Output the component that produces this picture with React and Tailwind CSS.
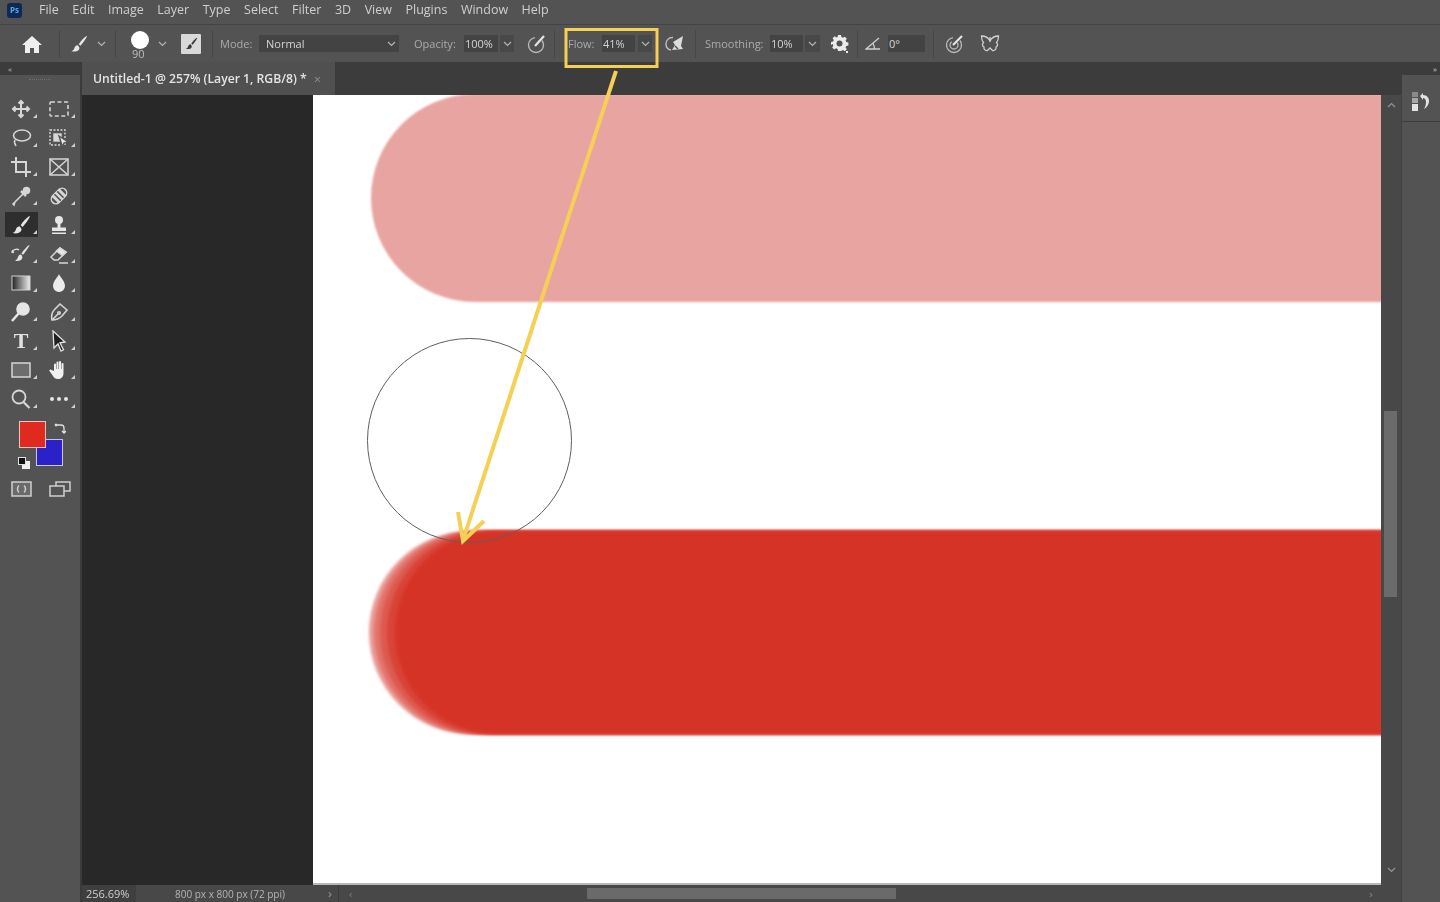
import React from "react";

const menus = ["File", "Edit", "Image", "Layer", "Type", "Select", "Filter", "3D", "View", "Plugins", "Window", "Help"];

const Chevron = ({ className = "" }) => (
  <svg width="9" height="6" viewBox="0 0 9 6" fill="none" stroke="#b5b5b5" strokeWidth="1.2" className={className}>
    <path d="M1 1l3.5 3.5L8 1" />
  </svg>
);

const Sep = ({ className = "" }) => <div className={`h-[28px] w-px bg-[#474747] ${className}`} />;

const BrushGlyph = ({ size = 18, color = "#e6e6e6" }) => (
  <svg width={size} height={size} viewBox="0 0 18 18" fill={color}>
    <path d="M16.5 1c-2.5 1.6-6 5.300-7.800 8.200l1.800 1.500C12.800 8.300 15.500 4.300 17 1.600z" />
    <path d="M7.700 10.200c-2 .2-3 1.500-3.400 3-.3 1.200-1.300 2.400-3 3 3 .8 6.500.4 7.700-1.700.7-1.200.5-2.300-.2-3.100z" />
  </svg>
);

// tool icons, 22x22 box, two columns per row
const I = ({ children, fill = "none", stroke = "#d6d6d6", sw = 1.6 }) => (
  <svg width="22" height="22" viewBox="0 0 22 22" fill={fill} stroke={stroke} strokeWidth={sw}>
    {children}
  </svg>
);

const tools = [
  [
    <I sw={2}><path d="M11 3v16M3 11h16M8.500 5.500L11 3l2.500 2.500M8.500 16.500L11 19l2.500-2.500M5.500 8.500L3 11l2.500 2.500M16.500 8.500L19 11l-2.500 2.500" /></I>,
    <I sw={1.6}><rect x="2" y="4" width="18" height="14" rx="1" strokeDasharray="4 2.500" /></I>,
  ],
  [
    <I><ellipse cx="12" cy="8.500" rx="8.500" ry="5.500" /><path d="M5 13c-1.500 2 0 4 1 6" /></I>,
    <I sw={1.400}><rect x="2" y="3" width="15" height="15" strokeDasharray="2 1.500" /><rect x="6" y="7" width="7" height="7" fill="#d6d6d6" /><path d="M11 9l9 6-4 1-1.500 4z" fill="#e8e8e8" stroke="#535353" /></I>,
  ],
  [
    <I sw={2}><path d="M1 6h15v15M6 1v15h15" /></I>,
    <I sw={1.500}><rect x="2" y="3" width="18" height="16" /><path d="M2 3l18 16M20 3L2 19" /></I>,
  ],
  [
    <I sw={1.500}><path d="M14 8l-9 9-1 3-1-1 2-2" /><path d="M11 6l5 5" strokeWidth="2.500" /><circle cx="16.500" cy="5.500" r="3" fill="#d6d6d6" /></I>,
    <I sw={1.500}><g transform="rotate(-45 11 11)"><rect x="2" y="6.500" width="18" height="9" rx="4.500" /><rect x="6" y="6.500" width="10" height="9" fill="#d6d6d6" /><path d="M9 6.500v9M13 6.500v9" stroke="#535353" /></g></I>,
  ],
  [
    <BrushGlyph size={20} />,
    <I fill="#e6e6e6" stroke="none"><circle cx="11" cy="6" r="4" /><rect x="9.500" y="8" width="3" height="6" /><path d="M4 13.500h14V17H4zM4 18.500h14V20H4z" /></I>,
  ],
  [
    <I fill="#e6e6e6" stroke="none"><path d="M19 2c-2 1.500-6 6-7.500 8.500l1.500 1.200C15 9.500 18 5 19.500 2.500zM11 11.500c-1.800.2-2.500 1.300-3 2.500-.3 1.300-1.200 2.800-3 3.800 3 .6 6-.2 7-2 .6-1.200.4-2.500-1-4.300z" /><path d="M2 8.500c2-2 5-3 7-1.500M3 7l-1 2 2 .5" fill="none" stroke="#e6e6e6" strokeWidth="1.300" /></I>,
    <I sw={1.500}><path d="M3 14l9-9 6 4-8 8H6z" /><path d="M12 5l6 4-3.500 3.500-6-4.500z" fill="#e6e6e6" /><path d="M11 20h9" /></I>,
  ],
  [
    <svg width="20" height="16" viewBox="0 0 20 16">
      <defs>
        <linearGradient id="grad" x1="0" x2="1" y1="0" y2="0">
          <stop offset="0" stopColor="#222" />
          <stop offset="1" stopColor="#eee" />
        </linearGradient>
      </defs>
      <rect x="1" y="1" width="18" height="14" fill="url(#grad)" stroke="#d0d0d0" />
    </svg>,
    <I fill="#ececec" stroke="none"><path d="M11 2c-1 3-6 7-6 12a6 6 0 0012 0c0-5-5-9-6-12z" /></I>,
  ],
  [
    <I fill="#e6e6e6" stroke="#e6e6e6"><circle cx="13" cy="8" r="6" /><path d="M9 12l-7 8" strokeWidth="2.500" /></I>,
    <I sw={1.600}><path d="M4 19c-1-4 0-8 3-11l5-5 7 6-5 6c-3 3-6 4-10 4z" /><path d="M4 19l6-6" /><circle cx="11" cy="12" r="1.200" /></I>,
  ],
  [
    <span className="font-['Liberation_Serif',serif] text-[22px] font-bold leading-[22px] text-[#e2e2e2]">T</span>,
    <I fill="#1f1f1f" stroke="#e2e2e2" sw={1.300}><path d="M5 1l12 11-5 .8 3.500 7-2.500 1.200-3-7L6 18z" /></I>,
  ],
  [
    <svg width="20" height="16" viewBox="0 0 20 16">
      <rect x="1" y="1" width="18" height="14" fill="#6d6d6d" stroke="#d6d6d6" strokeWidth="1.500" />
    </svg>,
    <I fill="#f0f0f0" stroke="none"><path d="M6 12V5.500a1 1 0 012 0V10h.5V3.500a1 1 0 012 0V10h.5V3a1 1 0 012 0v7h.5V5a1 1 0 012 0v9c0 4-2.500 6-5.500 6-2.500 0-4-1-5-3l-3.500-5c-.6-1 .6-2 1.600-1.200z" /></I>,
  ],
  [
    <I sw={1.800}><circle cx="9" cy="9" r="6.500" /><path d="M13.500 14l6 6" strokeWidth="2.200" /></I>,
    <I fill="#e6e6e6" stroke="none"><circle cx="4" cy="11" r="2" /><circle cx="11" cy="11" r="2" /><circle cx="18" cy="11" r="2" /></I>,
  ],
];

const Tool = ({ children, active, corner = true }) => (
  <div className="relative flex h-[29px] w-[38px] items-center justify-center">
    {active && <div className="absolute bottom-[2px] left-[3px] right-[2px] top-[2px] bg-[#2e2e2e]" />}
    <div className="relative flex items-center justify-center">{children}</div>
    {corner && <div className="absolute bottom-[5px] right-[3px] h-0 w-0 border-b-[4px] border-l-[4px] border-b-[#d0d0d0] border-l-transparent" />}
  </div>
);

const ToolPanel = () => (
  <aside className="flex w-[82px] shrink-0 flex-col border-r-2 border-[#3a3a3a] bg-[#535353]">
    <div className="flex h-[13px] items-center bg-[#3c3c3c] pl-[8px] text-[8px] leading-none text-[#bdbdbd]">«</div>
    <div className="mx-auto mt-[4px] h-[2px] w-[22px] border-t border-dotted border-[#6e6e6e]" />
    <div className="mt-[13px] flex flex-col pl-[2px] blur-[0.4px]">
      {tools.map((row, i) => (
        <div key={i} className="flex">
          <Tool active={i === 4}>{row[0]}</Tool>
          <Tool>{row[1]}</Tool>
        </div>
      ))}
    </div>
    <div className="relative ml-[18px] mt-[8px] h-[48px] w-[48px]">
      <div className="absolute left-[18px] top-[18px] h-[27px] w-[27px] border border-[#c6c6e6] bg-[#2a22c8]" />
      <div className="absolute left-[1px] top-0 h-[27px] w-[27px] border border-[#eac4c0] bg-[#e0291f]" />
      <svg className="absolute left-[36px] top-[2px]" width="12" height="12" viewBox="0 0 12 12" fill="none" stroke="#e0e0e0" strokeWidth="1.300">
        <path d="M2 2h5a3 3 0 013 3v5M1 3l2-2M1 1l2 2M8 8l2 2 2-2" />
      </svg>
      <div className="absolute left-[4px] top-[40px] h-[8px] w-[8px] bg-[#f0f0f0]" />
      <div className="absolute left-[0px] top-[36px] h-[8px] w-[8px] border border-[#e0e0e0] bg-[#111]" />
    </div>
    <div className="mt-[12px] flex items-center pl-[11px] blur-[0.4px]">
      <svg width="21" height="16" viewBox="0 0 21 16" fill="none" stroke="#cfcfcf" strokeWidth="1.500">
        <rect x="1" y="1" width="19" height="14" fill="#6a6a6a" />
        <path d="M8 4.500c-2 1.500-2 5.500 0 7M13 4.500c2 1.500 2 5.500 0 7" />
      </svg>
      <svg className="ml-[17px]" width="22" height="16" viewBox="0 0 22 16" fill="none" stroke="#cfcfcf" strokeWidth="1.500">
        <rect x="7" y="1" width="14" height="9" />
        <rect x="1" y="5" width="14" height="10" fill="#535353" />
      </svg>
    </div>
  </aside>
);

const Label = ({ children, className = "" }) => <span className={`text-[11px] leading-none text-[#ababab] ${className}`}>{children}</span>;

const Field = ({ children, className = "" }) => (
  <div className={`flex h-[17px] items-center bg-[#434343] pl-[1px] text-[11px] leading-none text-[#d4d4d4] ${className}`}>{children}</div>
);

const ChevBox = ({ className = "" }) => (
  <div className={`flex h-[17px] items-center justify-center bg-[#484848] ${className}`}>
    <Chevron />
  </div>
);

const OptionsBar = () => (
  <div className="flex h-[38px] shrink-0 items-center border-t border-[#434343] bg-[#535353]">
    <div className="flex items-center blur-[0.4px]">
      <svg className="ml-[22px]" width="20" height="18" viewBox="0 0 20 18" fill="#f0f0f0">
        <path d="M10 1L0 10h3v8h5v-5h4v5h5v-8h3z" />
      </svg>
      <Sep className="ml-[17px]" />
      <div className="ml-[10px]"><BrushGlyph /></div>
      <Chevron className="ml-[9px]" />
      <Sep className="ml-[9px]" />
      <div className="relative ml-[14px] h-[30px] w-[20px]">
        <div className="absolute left-px top-[2px] h-[18px] w-[18px] rounded-full bg-white" />
        <span className="absolute left-[2px] top-[19px] text-[11px] leading-[12px] text-[#bdbdbd]">90</span>
      </div>
      <Chevron className="ml-[8px]" />
      <div className="ml-[14px] flex h-[20px] w-[20px] items-center justify-center rounded-[1px] bg-[#d9d9d9]">
        <BrushGlyph size={13} color="#3a3a3a" />
      </div>
      <Sep className="ml-[11px]" />
      <Label className="ml-[7px] w-[39px]">Mode:</Label>
      <Field className="w-[140px] justify-between !pl-[7px] pr-[3px]">
        Normal
        <Chevron />
      </Field>
      <Label className="ml-[15px] w-[50px]">Opacity:</Label>
      <Field className="w-[34px]">100%</Field>
      <ChevBox className="ml-[2px] w-[14px]" />
      <svg className="ml-[13px]" width="20" height="20" viewBox="0 0 20 20" fill="none" stroke="#b9b9b9" strokeWidth="1.400">
        <circle cx="9" cy="11" r="7.500" strokeDasharray="34 8" />
        <path d="M8 12l9-10" stroke="#e4e4e4" strokeWidth="2.200" />
      </svg>
      <Sep className="ml-[7px]" />
      <Label className="ml-[13px] w-[34px]">Flow:</Label>
      <Field className="w-[33px]">41%</Field>
      <ChevBox className="ml-[3px] w-[14px]" />
      <svg className="ml-[13px]" width="20" height="18" viewBox="0 0 20 18" fill="none" stroke="#c0c0c0" strokeWidth="1.400">
        <path d="M8 2.500C3 2.500 1 6 1 9s2 5.500 5 6" />
        <path d="M18 1l-10 6 2 3-3 5 11-1-2-3z" fill="#dcdcdc" stroke="none" />
        <path d="M10 11l3 3" stroke="#535353" />
      </svg>
      <Sep className="ml-[10px]" />
      <Label className="ml-[9px] w-[65px]">Smoothing:</Label>
      <Field className="w-[33px]">10%</Field>
      <ChevBox className="ml-[2px] w-[15px]" />
      <svg className="ml-[11px]" width="18" height="20" viewBox="0 0 18 20" fill="#ececec">
        <path fillRule="evenodd" d="M7 1h3l.4 2.100 1.500.7L13.800 2.700l2 2-1.200 1.900.7 1.500 2.100.4v3l-2.100.4-.7 1.500 1.200 1.900-2 2-1.900-1.200-1.500.7L10 17H7l-.4-2.100-1.500-.7-1.900 1.200-2-2 1.200-1.900-.7-1.500L0 11V8l2.100-.4.700-1.500L1.600 4.200l2-2 1.900 1.200 1.100-.3zM8.500 6.500a3 3 0 100 6 3 3 0 000-6z" />
        <rect x="15" y="17" width="2" height="2" />
      </svg>
      <Sep className="ml-[8px]" />
      <svg className="ml-[7px]" width="16" height="14" viewBox="0 0 16 14" fill="none" stroke="#cfcfcf" strokeWidth="1.300">
        <path d="M14 1L1 12h14M8 6.500c1 1.500 1.500 3 1.500 5.500" />
      </svg>
      <Field className="ml-[7px] w-[37px]">0°</Field>
      <Sep className="ml-[8px]" />
      <svg className="ml-[11px]" width="20" height="20" viewBox="0 0 20 20" fill="none" stroke="#b9b9b9" strokeWidth="1.300">
        <circle cx="9" cy="11" r="7.500" strokeDasharray="34 8" />
        <circle cx="9" cy="11" r="4" strokeDasharray="16 6" />
        <path d="M8 11l9-9" stroke="#e4e4e4" strokeWidth="2.200" />
      </svg>
      <svg className="ml-[15px]" width="20" height="20" viewBox="0 0 20 20" fill="none" stroke="#d0d0d0" strokeWidth="1.300">
        <path d="M10 7C8 3 5 2 1.500 2c0 3 .5 5 2 6.500C2 10 2 12 4 13c-.5 2 1 4 3.500 3.500L10 14l2.500 2.500C15 17 16.500 15 16 13c2-1 2-3 .5-4.500 1.500-1.500 2-3.500 2-6.500C15 2 12 3 10 7zM10 3v5" />
      </svg>
    </div>
  </div>
);

const Canvas = () => (
  <div className="relative h-full overflow-hidden bg-white">
    {/* painted strokes */}
    <div className="absolute left-[58px] top-[-1px] h-[208px] w-[1100px] rounded-l-[104px] bg-[#e8a4a0] blur-[1px]" />
    <div className="absolute left-[56px] top-[436px] h-[203px] w-[1100px] rounded-l-[102px] bg-[#e89c97] blur-[1.500px]" />
    <div className="absolute left-[61px] top-[436px] h-[203px] w-[1100px] rounded-l-[102px] bg-[#e3736b] blur-[1.500px]" />
    <div className="absolute left-[67px] top-[436px] h-[203px] w-[1100px] rounded-l-[102px] bg-[#dd5a50] blur-[1.500px]" />
    <div className="absolute left-[74px] top-[436px] h-[203px] w-[1100px] rounded-l-[102px] bg-[#d94338] blur-[1.500px]" />
    <div className="absolute left-[82px] top-[436px] h-[203px] w-[1100px] rounded-l-[102px] bg-[#d63327] blur-[1.500px]" />
    {/* brush cursor */}
    <div className="absolute left-[54px] top-[243px] h-[205px] w-[205px] rounded-full border border-[#5f5f5f]" />
  </div>
);

export default function App() {
  return (
    <div className="relative flex h-[902px] w-[1440px] flex-col overflow-hidden bg-[#535353] font-['Open_Sans','Liberation_Sans',sans-serif]">
      <header className="flex h-[24px] shrink-0 items-center bg-[#535353] pb-[4px] blur-[0.4px]">
        <div className="ml-[7px] flex h-[15px] w-[15px] items-center justify-center rounded-[3px] bg-[#0f2a52] text-[8px] font-bold leading-none text-[#4fa8f0]">Ps</div>
        <nav className="ml-[17px] flex gap-[13.500px] text-[12.500px] leading-none text-[#cfcfcf]">
          {menus.map((m) => (
            <span key={m}>{m}</span>
          ))}
        </nav>
      </header>
      <OptionsBar />
      <div className="flex min-h-0 flex-1">
        <ToolPanel />
        <main className="flex min-w-0 flex-1 flex-col bg-[#3c3c3c]">
          <div className="flex h-[33px] shrink-0 items-stretch bg-[#3c3c3c]">
            <div className="flex w-[253px] items-center bg-[#505050] pl-[11px] pt-[1px] text-[12.200px] font-semibold leading-none text-[#e4e4e4] blur-[0.3px]">
              Untitled-1 @ 257% (Layer 1, RGB/8) *
              <span className="ml-[7px] text-[13px] font-normal text-[#8e8e8e]">×</span>
            </div>
          </div>
          <div className="flex min-h-0 flex-1">
            <div className="flex min-w-0 flex-1 flex-col">
              <div className="flex min-h-0 flex-1">
                <div className="w-[231px] shrink-0 bg-[#282828]" />
                <div className="flex-1 border-b-2 border-[#b8b8b8]">
                  <Canvas />
                </div>
              </div>
              <div className="flex h-[17px] shrink-0 items-center bg-[#484848] text-[11px] leading-none text-[#b5b5b5]">
                <div className="flex h-full w-[54px] items-center bg-[#3f3f3f] pl-[4px] text-[#cfcfcf] blur-[0.3px]">256.69%</div>
                <span className="ml-[39px] w-[150px] text-[10px] blur-[0.3px]">800 px x 800 px (72 ppi)</span>
                <span className="ml-[3px] w-[8px] text-[13px] text-[#9a9a9a]">›</span>
                <div className="ml-[2px] h-full w-px bg-[#3c3c3c]" />
                <span className="ml-[10px] text-[#7d7d7d]">‹</span>
                <div className="ml-[235px] h-[11px] w-[309px] bg-[#6a6a6a]" />
                <span className="ml-[473px] text-[#8a8a8a]">›</span>
              </div>
            </div>
            <div className="flex w-[21px] shrink-0 flex-col items-center border-r border-[#424242] bg-[#484848]">
              <Chevron className="mt-[7px] rotate-180 opacity-70" />
              <div className="ml-[-1px] mt-[303px] h-[186px] w-[13px] bg-[#6b6b6b]" />
              <Chevron className="mt-[270px] opacity-70" />
            </div>
          </div>
        </main>
        <aside className="flex w-[38px] shrink-0 flex-col bg-[#535353]">
          <div className="flex h-[13px] items-center justify-end bg-[#3c3c3c] pr-[3px] text-[8px] leading-none text-[#cfcfcf]">»</div>
          <div className="flex h-[47px] flex-col items-center border-b border-[#3c3c3c] pt-[17px]">
            <svg width="18" height="20" viewBox="0 0 18 20" fill="#e4e4e4">
              <rect x="0" y="0" width="6" height="5" fill="#8a8a8a" />
              <rect x="0" y="6" width="6" height="5" fill="#a8a8a8" />
              <rect x="0" y="12" width="6" height="7" />
              <path d="M8 4l3-3v2c4 0 6 3 6 6 0 4-3 7-5 8 1-2 2-4 2-7 0-2-1-4-3-4v2z" />
            </svg>
          </div>
        </aside>
      </div>

      {/* callout over the screenshot */}
      <svg className="pointer-events-none absolute left-0 top-0" width="1440" height="902" fill="none" stroke="#f6cf55" strokeWidth="3">
        <rect x="566" y="29.500" width="91" height="37" />
        <path d="M616 71L463 540" strokeWidth="4" />
        <path d="M458 512l5 29 21-20" strokeWidth="4" />
      </svg>
    </div>
  );
}
